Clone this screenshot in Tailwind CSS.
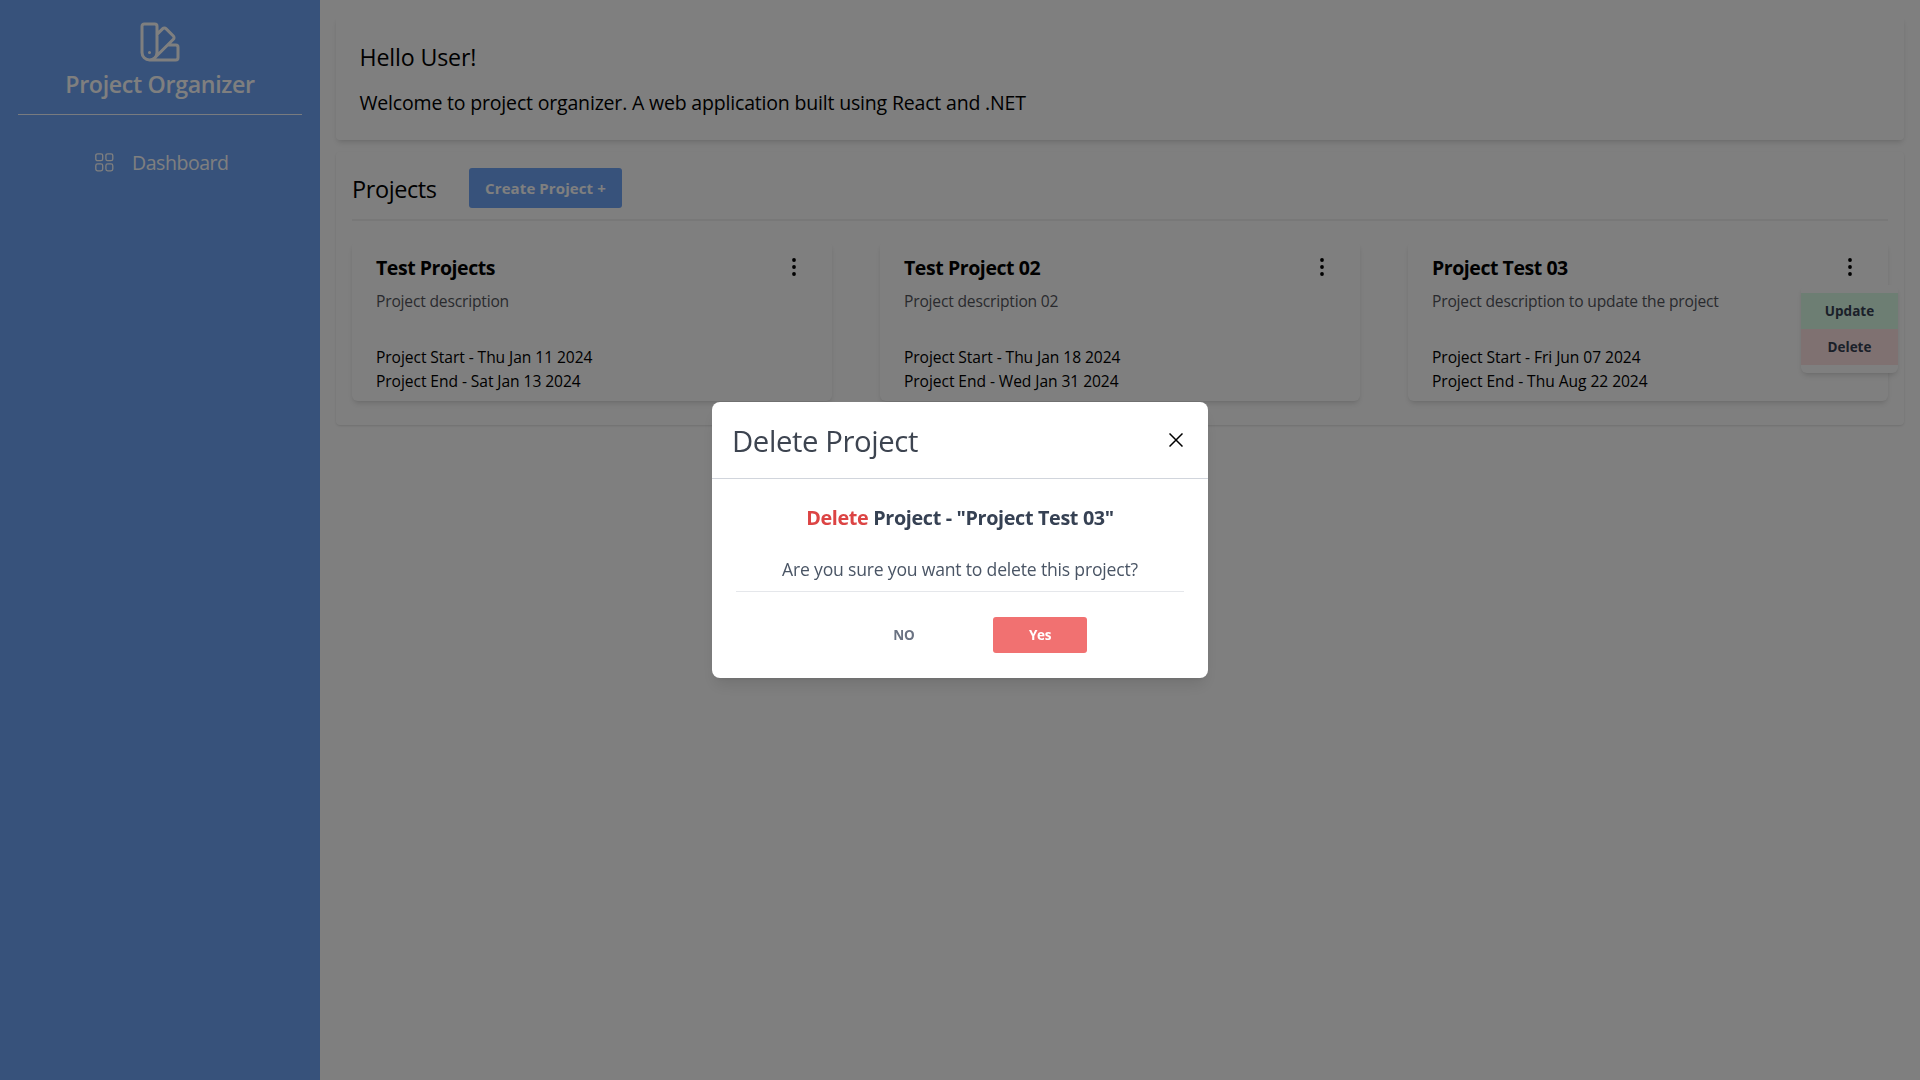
<!DOCTYPE html>
<html lang="en">
<head>
<meta charset="utf-8">
<title>Project Organizer</title>
<script src="https://cdn.jsdelivr.net/npm/@tailwindcss/browser@4"></script>
</head>
<body class="h-screen overflow-hidden bg-white font-['Open_Sans','Noto_Sans',sans-serif] text-black">
<div class="flex h-full">
  <aside class="flex w-80 shrink-0 flex-col bg-[#6ea4f6] px-[18px] pt-[18px] text-white">
    <div class="flex flex-col items-center border-b border-white/90 pb-[13px]">
      <svg class="size-12" viewBox="0 0 24 24" fill="none" stroke="currentColor" stroke-width="1.5" stroke-linecap="round" stroke-linejoin="round"><path d="M4.098 19.902a3.75 3.75 0 0 0 5.304 0l6.401-6.402M6.75 21A3.75 3.75 0 0 1 3 17.25V4.125C3 3.504 3.504 3 4.125 3h5.25c.621 0 1.125.504 1.125 1.125v4.072M6.75 21a3.75 3.75 0 0 0 3.75-3.75V8.197M6.75 21h13.125c.621 0 1.125-.504 1.125-1.125v-5.25c0-.621-.504-1.125-1.125-1.125h-4.072M10.5 17.25V8.197m0 0 2.88-2.88c.438-.439 1.15-.439 1.59 0l3.712 3.713c.44.44.44 1.152 0 1.59l-2.879 2.88M6.75 17.25h.008v.008H6.75v-.008Z"/></svg>
      <h1 class="pt-px text-[23.2px] leading-[34px] font-semibold tracking-[-0.33px]">Project Organizer</h1>
    </div>
    <nav class="mt-8 flex items-center pl-[77px]">
      <svg class="size-[19px] shrink-0" viewBox="0 0 19 19" fill="none" stroke="currentColor" stroke-width="1.3"><rect x=".8" y=".8" width="6.9" height="6.9" rx="1.8"/><rect x="10.9" y=".8" width="6.9" height="6.9" rx="1.8"/><rect x=".8" y="10.9" width="6.9" height="6.9" rx="1.8"/><rect x="10.9" y="10.9" width="6.9" height="6.9" rx="1.8"/></svg>
      <span class="ml-[18px] pt-0.5 text-[19.5px] leading-7 tracking-[-0.45px]">Dashboard</span>
    </nav>
  </aside>

  <main class="flex-1 p-4">
    <section class="rounded-sm px-[23.5px] pt-[25px] pb-[23px] shadow-md">
      <h2 class="text-[23.2px] leading-8 tracking-[-0.15px]">Hello User!</h2>
      <p class="mt-4 text-[19.5px] leading-7 tracking-[-0.18px]">Welcome to project organizer. A web application built using React and .NET</p>
    </section>

    <section class="mt-3 rounded-sm px-4 pt-4 pb-6 shadow-sm">
      <div class="flex items-center border-b-2 border-[#f0f0f0] pb-[11px]">
        <h2 class="w-[117px] pt-0.5 text-[23.5px] leading-8 tracking-[-0.4px]">Projects</h2>
        <button class="h-10 w-[153px] rounded-[3px] bg-[#6ea4f6] text-[15px] font-bold tracking-[0.1px] text-white">Create Project +</button>
      </div>
      <div class="mt-5 grid grid-cols-3 gap-12">
        <article class="relative h-[160px] rounded-md px-6 pt-3 shadow-md">
          <div class="flex items-start justify-between">
            <h3 class="pt-px text-[19.5px] leading-7 font-bold tracking-[-0.45px]">Test Projects</h3>
            <svg class="mt-0.5 mr-0.5 size-6" viewBox="0 0 24 24"><circle cx="12" cy="5" r="1.9"/><circle cx="12" cy="12" r="1.9"/><circle cx="12" cy="19" r="1.9"/></svg>
          </div>
          <p class="mt-[7px] text-[15.6px] leading-6 tracking-[-0.18px] text-[#53555c]">Project description</p>
          <div class="mt-8 text-[15.6px] leading-6 tracking-[-0.07px]"><p>Project Start - Thu Jan 11 2024</p><p>Project End - Sat Jan 13 2024</p></div>
        </article>
        <article class="relative h-[160px] rounded-md px-6 pt-3 shadow-md">
          <div class="flex items-start justify-between">
            <h3 class="pt-px text-[19.5px] leading-7 font-bold tracking-[-0.42px]">Test Project 02</h3>
            <svg class="mt-0.5 mr-0.5 size-6" viewBox="0 0 24 24"><circle cx="12" cy="5" r="1.9"/><circle cx="12" cy="12" r="1.9"/><circle cx="12" cy="19" r="1.9"/></svg>
          </div>
          <p class="mt-[7px] text-[15.6px] leading-6 tracking-[-0.18px] text-[#53555c]">Project description 02</p>
          <div class="mt-8 text-[15.6px] leading-6 tracking-[-0.07px]"><p>Project Start - Thu Jan 18 2024</p><p>Project End - Wed Jan 31 2024</p></div>
        </article>
        <article class="relative h-[160px] rounded-md px-6 pt-3 shadow-md">
          <div class="flex items-start justify-between">
            <h3 class="pt-px text-[19.5px] leading-7 font-bold tracking-[-0.45px]">Project Test 03</h3>
            <svg class="mt-0.5 mr-0.5 size-6" viewBox="0 0 24 24"><circle cx="12" cy="5" r="1.9"/><circle cx="12" cy="12" r="1.9"/><circle cx="12" cy="19" r="1.9"/></svg>
          </div>
          <p class="mt-[7px] text-[15.6px] leading-6 tracking-[-0.18px] text-[#53555c]">Project description to update the project</p>
          <div class="mt-8 text-[15.6px] leading-6 tracking-[-0.05px]"><p>Project Start - Fri Jun 07 2024</p><p>Project End - Thu Aug 22 2024</p></div>
          <div class="absolute top-11 -right-[10px] flex w-[97px] flex-col rounded-md bg-white py-2 text-[13.5px] font-bold text-gray-700 shadow-md">
            <button class="h-9 bg-green-100">Update</button>
            <button class="h-9 bg-red-100">Delete</button>
          </div>
        </article>
      </div>
    </section>
  </main>
</div>

<div class="fixed inset-0 flex items-center justify-center bg-black/50">
  <div class="h-[276px] w-[496px] rounded-lg bg-white shadow-lg">
    <header class="flex h-[77px] items-center justify-between border-b border-gray-300 pr-[25px] pl-5">
      <h2 class="pt-0.5 text-[29.3px] leading-9 tracking-[-0.4px] text-[#3d4450]">Delete Project</h2>
      <svg class="mb-px size-[14px]" viewBox="0 0 14 14" fill="none" stroke="black" stroke-width="1.5"><path d="M.5.5l13 13M13.5.5l-13 13"/></svg>
    </header>
    <div class="px-6 pt-[25px] text-center">
      <h3 class="text-[19.8px] leading-7 font-bold tracking-[-0.35px] text-gray-700"><span class="text-[#dc4444]">Delete</span> Project - "Project Test 03"</h3>
      <p class="mt-[23px] border-b border-gray-200 pb-2 text-[17.6px] leading-7 tracking-[-0.2px] text-gray-600">Are you sure you want to delete this project?</p>
      <div class="mt-[25px] flex justify-center gap-[42px] pl-6">
        <button class="h-9 w-[94px] text-[13.5px] font-bold text-gray-500">NO</button>
        <button class="h-9 w-[94px] rounded-[3px] bg-[#f17171] text-[13.5px] font-bold tracking-[-0.3px] text-white">Yes</button>
      </div>
    </div>
  </div>
</div>
</body>
</html>
